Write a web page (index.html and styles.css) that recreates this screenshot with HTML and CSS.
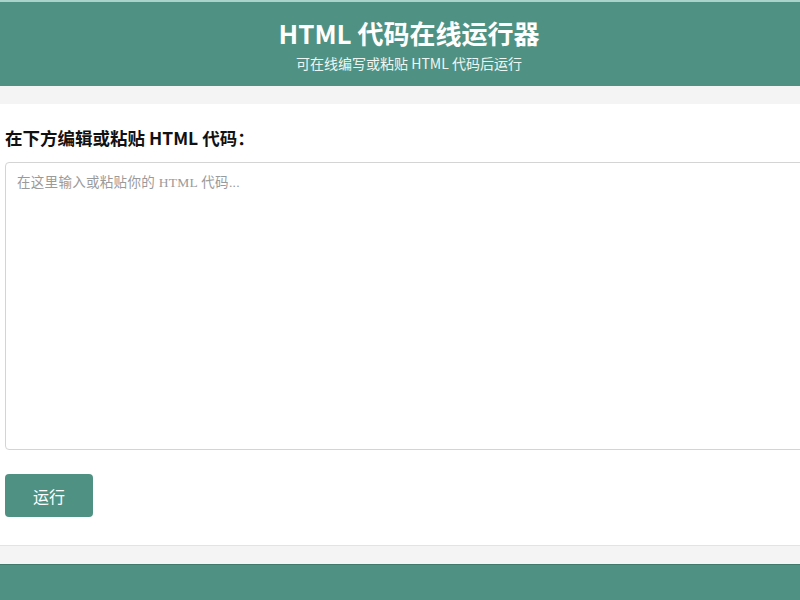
FILE: index.html
```html
<!DOCTYPE html>
<html lang="zh-CN">
<head>
<meta charset="utf-8">
<title>HTML 代码在线运行器</title>
<link rel="stylesheet" href="styles.css">
</head>
<body>
<div class="page">
  <header class="site-header">
    <h1 class="site-title">HTML 代码在线运行器</h1>
    <p class="site-subtitle">可在线编写或粘贴 HTML 代码后运行</p>
  </header>
  <main class="card">
    <h2 class="card-title">在下方编辑或粘贴 HTML 代码：</h2>
    <textarea class="editor" placeholder="在这里输入或粘贴你的 HTML 代码..."></textarea>
    <button class="run-btn" type="button">运行</button>
  </main>
  <footer class="site-footer"></footer>
</div>
</body>
</html>
```
FILE: styles.css
```css
html, body {
  margin: 0;
  padding: 0;
}
body {
  background: #f4f4f5;
  font-family: "Noto Sans CJK SC", "Noto Sans", sans-serif;
  color: #222;
  overflow: hidden;
}
.page {
  width: 818px;
}
.site-header {
  background: #4f9283;
  border-top: 2px solid #a9d3cb;
  height: 84px;
  box-sizing: content-box;
  display: flex;
  flex-direction: column;
  align-items: center;
  color: #fff;
}
.site-title {
  margin: 14px 0 0;
  font-size: 26px;
  line-height: 34px;
  font-weight: 700;
}
.site-subtitle {
  margin: 3px 0 0;
  font-size: 14px;
  line-height: 20px;
  color: #eef6f4;
}
.card {
  margin-top: 18px;
  background: #fff;
  border-bottom: 1px solid #e3e3e3;
  padding: 22px 0 28px 5px;
  display: flex;
  flex-direction: column;
  align-items: flex-start;
}
.card-title {
  margin: 0 0 12px;
  font-size: 17.5px;
  line-height: 24px;
  font-weight: 700;
  color: #111;
}
.editor {
  width: 813px;
  height: 288px;
  box-sizing: border-box;
  border: 1px solid #d4d4d4;
  border-radius: 4px;
  padding: 10px 11px;
  font-family: "Liberation Serif", "Noto Sans CJK SC", serif;
  font-size: 13.5px;
  letter-spacing: 0.3px;
  line-height: 20px;
  resize: none;
  outline: none;
}
.editor::placeholder {
  color: #9a9a9a;
}
.run-btn {
  margin-top: 24px;
  width: 88px;
  height: 43px;
  background: #4f9283;
  color: #fff;
  border: none;
  border-radius: 4px;
  font-family: "Noto Sans CJK SC", sans-serif;
  font-size: 16px;
  cursor: pointer;
}
.site-footer {
  margin-top: 18px;
  height: 60px;
  background: #4f9283;
  border-top: 1px solid #3f7a6d;
}
```
